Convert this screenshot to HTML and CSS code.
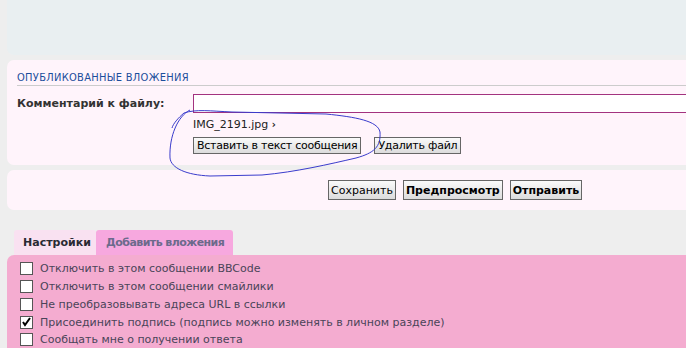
FILE: index.html
```html
<!DOCTYPE html>
<html lang="ru">
<head>
  <meta charset="UTF-8" />
  <title>Вложения</title>
  <link rel="stylesheet" href="styles.css">
</head>
<body>
  <div class="page">
    <div class="panel-top"></div>

    <!-- Опубликованные вложения -->
    <div class="panel panel-files">
      <h3 class="panel-title">Опубликованные вложения</h3>
      <div class="file-row">
        <label class="file-label">Комментарий к файлу:</label>
        <div class="file-body">
          <input type="text" class="file-input">
          <div class="file-name">IMG_2191.jpg <span class="arrow">›</span></div>
          <div class="file-buttons">
            <button class="btn">Вставить в текст сообщения</button>
            <button class="btn">Удалить файл</button>
          </div>
        </div>
      </div>
      <svg class="scribble" width="230" height="80" viewBox="160 104 230 80">
        <path d="M190,110 C178,116 169,136 170,158 C171,168 186,175 210,176 L262,175 C296,172 330,164 356,158 C374,153 381,147 380,132 C378,121 356,117 326,114 L232,112 C210,111 196,109 184,113 C178,118 173,124 172,128" />
      </svg>
    </div>

    <!-- Кнопки отправки -->
    <div class="panel panel-submit">
      <button class="btn">Сохранить</button>
      <button class="btn btn-bold">Предпросмотр</button>
      <button class="btn btn-bold">Отправить</button>
    </div>

    <div class="tabs">
      <span class="tab tab-active">Настройки</span>
      <span class="tab tab-add">Добавить вложения</span>
    </div>

    <div class="panel-options">
      <div class="option"><span class="check"></span>Отключить в этом сообщении BBCode</div>
      <div class="option"><span class="check"></span>Отключить в этом сообщении смайлики</div>
      <div class="option"><span class="check"></span>Не преобразовывать адреса URL в ссылки</div>
      <div class="option">
        <span class="check"><svg width="11" height="11" viewBox="0 0 11 11"><path d="M2,5 L4,8 L9,1" /></svg></span>Присоединить подпись (подпись можно изменять в личном разделе)
      </div>
      <div class="option"><span class="check"></span>Сообщать мне о получении ответа</div>
    </div>
  </div>
</body>
</html>
```

FILE: styles.css
```css
* {
  box-sizing: border-box;
  margin: 0;
  padding: 0;
}

html, body {
  background: #eeeeee;
  font-family: "DejaVu Sans", Verdana, sans-serif;
  font-size: 11px;
  color: #333;
  height: 100%;
  overflow: hidden;
}

.page {
  padding-left: 7px;
}

.panel-top {
  height: 55px;
  background: #e9eff1;
  border-radius: 0 0 0 7px;
}

.panel {
  background: #fff4fb;
  border-radius: 7px 0 0 7px;
  margin-top: 5px;
}

.panel-files {
  position: relative;
  height: 105px;
  padding: 11px 0 0 10px;
}

.panel-title {
  font-family: "DejaVu Sans Condensed", "DejaVu Sans", sans-serif;
  font-size: 11px;
  font-weight: normal;
  letter-spacing: 0.3px;
  text-transform: uppercase;
  color: #1c4e9c;
  line-height: 13px;
  padding-bottom: 1px;
  border-bottom: 1px solid #cccccc;
}

.file-row {
  display: flex;
  margin-top: 8px;
}

.file-label {
  width: 176px;
  font-weight: bold;
  color: #333;
  padding-top: 3px;
}

.file-body {
  flex: 1;
}

.file-input {
  display: block;
  width: 100%;
  height: 19px;
  border: 1px solid #a3327f;
  border-right: none;
  background: #fff;
}

.file-name {
  margin-top: 5px;
  line-height: 14px;
  color: #222;
}

.arrow {
  font-weight: bold;
  font-size: 10px;
}

.file-buttons {
  display: flex;
  gap: 13px;
  margin-top: 5px;
}

.btn {
  font-family: "DejaVu Sans", Verdana, sans-serif;
  font-size: 11px;
  color: #000;
  height: 17px;
  padding: 0 3px;
  border: 1px solid #666;
  background: linear-gradient(#fafafa, #dcdcdc);
  line-height: 15px;
}

.file-buttons .btn {
  letter-spacing: -0.25px;
}

.btn-bold {
  font-weight: bold;
}

.scribble {
  position: absolute;
  left: 153px;
  top: 44px;
  overflow: visible;
}

.scribble path {
  fill: none;
  stroke: #3a3ccc;
  stroke-width: 1;
}

.panel-submit {
  height: 40px;
  display: flex;
  gap: 7px;
  padding: 10px 0 0 321px;
}

.panel-submit .btn {
  height: 20px;
  padding: 0 2px;
}

.tabs {
  display: flex;
  margin: 20px 0 0 7px;
}

.tab {
  height: 25px;
  line-height: 25px;
  font-weight: bold;
  border-radius: 3px 3px 0 0;
}

.tab-active {
  width: 82px;
  padding-left: 9px;
  color: #2a2a33;
  background: #f9e1f1;
}

.tab-add {
  width: 137px;
  padding-left: 10px;
  letter-spacing: -0.55px;
  color: #6c6a8c;
  background: #f7a8df;
}

.panel-options {
  background: #f4acd0;
  border-radius: 7px 0 0 0;
  height: 100px;
  padding: 5px 0 0 13px;
}

.option {
  display: flex;
  align-items: center;
  height: 17.75px;
  color: #4a4458;
}

.check {
  width: 13px;
  height: 13px;
  border: 1px solid #555;
  background: #fff;
  margin-right: 7px;
  display: flex;
  align-items: center;
  justify-content: center;
}

.check path {
  fill: none;
  stroke: #000;
  stroke-width: 2;
}
```
